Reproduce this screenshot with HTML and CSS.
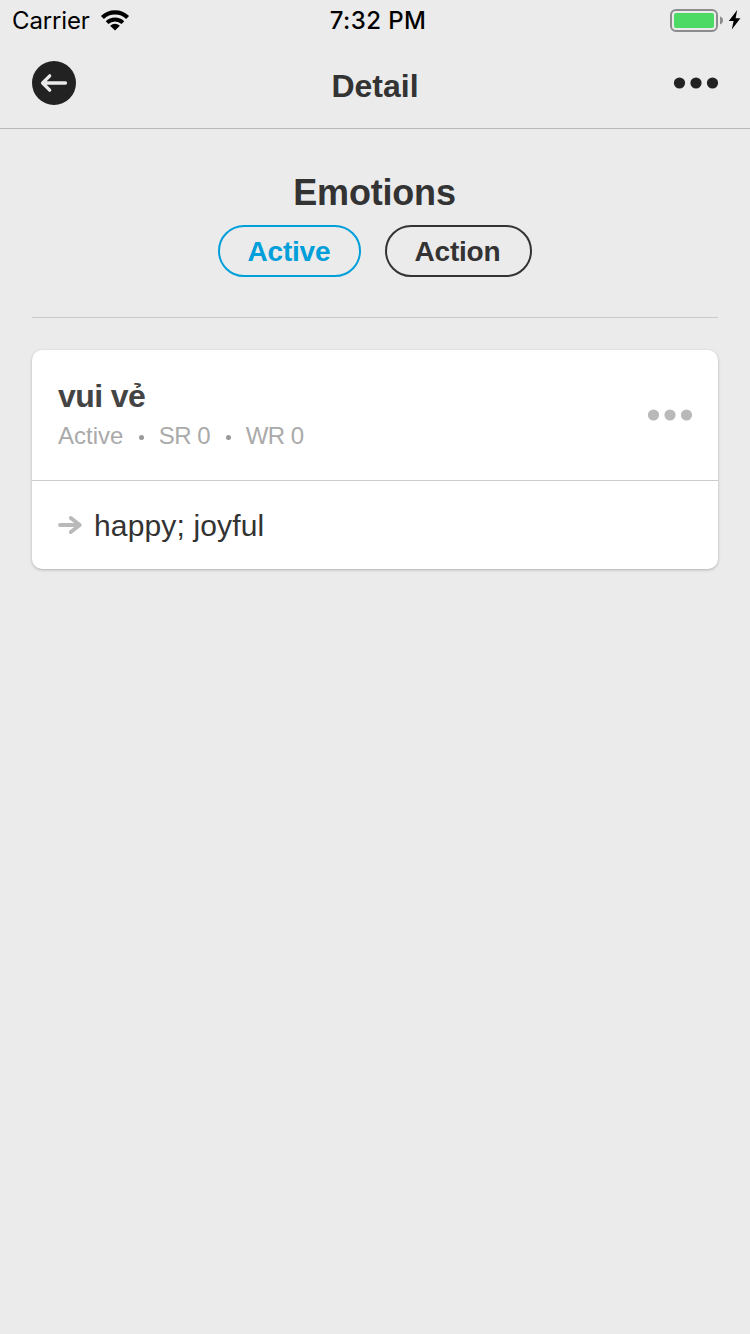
FILE: index.html
```html
<!DOCTYPE html>
<html lang="en">
<head>
<meta charset="utf-8">
<title>Detail</title>
<link rel="stylesheet" href="styles.css">
</head>
<body>
<div class="status">
  <div class="status-left">
    <span class="carrier">Carrier</span>
    <svg class="wifi" width="28" height="21" viewBox="0 0 28 21">
      <path d="M1.4 7.5A18.3 18.3 0 0 1 26.6 7.5" fill="none" stroke="#000" stroke-width="4.2"/>
      <path d="M6.1 12.6A11.6 11.6 0 0 1 21.9 12.6" fill="none" stroke="#000" stroke-width="4"/>
      <path d="M9.1 15.8Q14 11.8 18.9 15.8L14 20.4Z" fill="#000"/>
    </svg>
  </div>
  <span class="time">7:32 PM</span>
  <svg class="battery" width="70" height="24" viewBox="0 0 70 24">
    <rect x="1" y="1" width="46" height="21" rx="5" fill="none" stroke="#8c8c8e" stroke-width="2"/>
    <rect x="4" y="4" width="40" height="15" rx="2" fill="#4cd964"/>
    <path d="M50 7.6Q53 8.6 53 11.5T50 15.4Z" fill="#8c8c8e"/>
    <path d="M67.2 1L58.8 12H63.6L61.8 20.6L70.4 9.2H65.6Z" fill="#000"/>
  </svg>
</div>
<header class="navbar">
  <svg width="44" height="44" viewBox="0 0 44 44">
    <circle cx="22" cy="22" r="22" fill="#222"/>
    <path d="M33.5 22H10.8M17.7 14.8L10.6 22L17.7 29.2" fill="none" stroke="#ebebeb" stroke-width="3.3" stroke-linecap="round" stroke-linejoin="round"/>
  </svg>
  <h1 class="title">Detail</h1>
  <svg class="dots-dark" width="44" height="44" viewBox="0 0 44 44">
    <circle cx="5.5" cy="22" r="5.6"/><circle cx="22" cy="22" r="5.6"/><circle cx="38.5" cy="22" r="5.6"/>
  </svg>
</header>
<main class="content">
  <section class="summary">
    <h2 class="heading">Emotions</h2>
    <div class="tags">
      <span class="tag tag-active">Active</span>
      <span class="tag tag-action">Action</span>
    </div>
  </section>
  <article class="card">
    <div class="card-head">
      <div>
        <h3 class="word">vui vẻ</h3>
        <div class="meta"><span>Active</span><i class="dot"></i><span>SR 0</span><i class="dot"></i><span>WR 0</span></div>
      </div>
      <svg class="dots-light" width="44" height="12" viewBox="0 0 44 12">
        <circle cx="5.5" cy="6" r="5.6"/><circle cx="22" cy="6" r="5.6"/><circle cx="38.5" cy="6" r="5.6"/>
      </svg>
    </div>
    <div class="card-body">
      <svg width="24" height="20" viewBox="0 0 24 20">
        <path d="M2 10H21.5M12.8 3L21.8 10L12.8 17" fill="none" stroke="#b9b9b9" stroke-width="3.8" stroke-linecap="round" stroke-linejoin="round"/>
      </svg>
      <span class="meaning">happy; joyful</span>
    </div>
  </article>
</main>
</body>
</html>
```
FILE: styles.css
```css
* { box-sizing: border-box; }
body {
  margin: 0;
  min-height: 1334px;
  background: #ebebeb;
  color: #333;
  font-family: "Liberation Sans", Arial, sans-serif;
}
h1, h2, h3 { margin: 0; font-weight: 700; }
svg { display: block; overflow: visible; flex: none; }
.status {
  display: grid;
  grid-template-columns: 1fr auto 1fr;
  height: 40px;
  padding: 0 10px 0 12px;
  color: #000;
  font-family: Inter, sans-serif;
  font-size: 24px;
  line-height: 42px;
}
.status-left { display: flex; gap: 12px; }
.wifi { margin-top: 10px; }
.carrier { width: 77px; letter-spacing: -0.15px; white-space: nowrap; }
.time { margin-left: 4px; font-weight: 500; letter-spacing: 0.4px; }
.battery { justify-self: end; margin-top: 9px; }
.navbar {
  display: flex;
  justify-content: space-between;
  height: 89px;
  padding: 21px 32px 0;
  border-bottom: 1px solid #b8b8b8;
}
.title { font-size: 32px; line-height: 50px; }
.dots-dark { fill: #222; }
.content { padding: 0 32px; }
.summary {
  display: flex;
  flex-direction: column;
  align-items: center;
  height: 189px;
  padding-top: 44px;
  border-bottom: 1px solid #c9c9c9;
}
.heading { padding-right: 1px; font-size: 36px; line-height: 40px; letter-spacing: -0.2px; }
.tags { display: flex; gap: 24px; margin-top: 12px; }
.tag {
  height: 52px;
  padding-left: 27.5px;
  border: 2px solid;
  border-radius: 26px;
  font-size: 28px;
  font-weight: 700;
  line-height: 50px;
  letter-spacing: -0.2px;
}
.tag-active { width: 143px; color: #009fda; }
.tag-action { width: 147px; color: #333; }
.card {
  margin-top: 32px;
  border-radius: 10px;
  background: #fff;
  box-shadow: 0 1px 3px rgba(0, 0, 0, 0.25);
}
.card-head {
  display: flex;
  justify-content: space-between;
  align-items: center;
  height: 131px;
  padding: 0 26px;
  border-bottom: 1px solid #ccc;
}
.word {
  margin-top: -2px;
  color: #444;
  font-size: 32px;
  line-height: 40px;
  letter-spacing: -0.6px;
}
.meta {
  display: flex;
  align-items: center;
  margin-top: 4px;
  color: #aaa;
  font-size: 24px;
  line-height: 32px;
}
.meta span + i + span { letter-spacing: -0.5px; }
.dot { width: 5px; height: 5px; margin: 3px 15px 0 15.5px; border-radius: 50%; background: #999; }
.dots-light { fill: #b9b9b9; }
.card-body { display: flex; align-items: center; gap: 12px; height: 88px; padding: 0 26px; }
.meaning { padding-top: 2px; font-size: 30px; line-height: 36px; letter-spacing: 0.15px; }
```
